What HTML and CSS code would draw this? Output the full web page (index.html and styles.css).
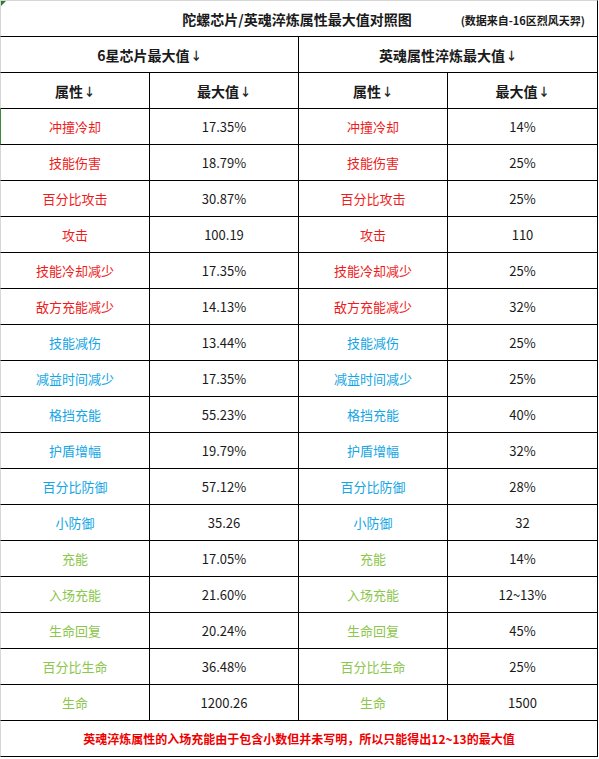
FILE: index.html
```html
<!DOCTYPE html>
<html lang="zh">
  <head>
    <meta charset="UTF-8" />
    <meta name="viewport" content="width=device-width, initial-scale=1.0" />
    <title>陀螺芯片/英魂淬炼属性最大值对照图</title>
    <link rel="stylesheet" href="styles.css">
  </head>
  <body>
    <div class="sheet">
      <div class="cell title-cell">
        <span class="title">陀螺芯片/英魂淬炼属性最大值对照图</span>
        <span class="source">(数据来自-16区烈风天羿)</span>
      </div>

      <div class="cell group first">6星芯片最大值<span class="arrow">↓</span></div>
      <div class="cell group">英魂属性淬炼最大值<span class="arrow">↓</span></div>

      <div class="cell head first">属性<span class="arrow">↓</span></div>
      <div class="cell head">最大值<span class="arrow">↓</span></div>
      <div class="cell head">属性<span class="arrow">↓</span></div>
      <div class="cell head">最大值<span class="arrow">↓</span></div>

      <div class="cell first red selected">冲撞冷却</div>
      <div class="cell">17.35%</div>
      <div class="cell red">冲撞冷却</div>
      <div class="cell">14%</div>

      <div class="cell first red">技能伤害</div>
      <div class="cell">18.79%</div>
      <div class="cell red">技能伤害</div>
      <div class="cell">25%</div>

      <div class="cell first red">百分比攻击</div>
      <div class="cell">30.87%</div>
      <div class="cell red">百分比攻击</div>
      <div class="cell">25%</div>

      <div class="cell first red">攻击</div>
      <div class="cell">100.19</div>
      <div class="cell red">攻击</div>
      <div class="cell">110</div>

      <div class="cell first red">技能冷却减少</div>
      <div class="cell">17.35%</div>
      <div class="cell red">技能冷却减少</div>
      <div class="cell">25%</div>

      <div class="cell first red">敌方充能减少</div>
      <div class="cell">14.13%</div>
      <div class="cell red">敌方充能减少</div>
      <div class="cell">32%</div>

      <div class="cell first blue">技能减伤</div>
      <div class="cell">13.44%</div>
      <div class="cell blue">技能减伤</div>
      <div class="cell">25%</div>

      <div class="cell first blue">减益时间减少</div>
      <div class="cell">17.35%</div>
      <div class="cell blue">减益时间减少</div>
      <div class="cell">25%</div>

      <div class="cell first blue">格挡充能</div>
      <div class="cell">55.23%</div>
      <div class="cell blue">格挡充能</div>
      <div class="cell">40%</div>

      <div class="cell first blue">护盾增幅</div>
      <div class="cell">19.79%</div>
      <div class="cell blue">护盾增幅</div>
      <div class="cell">32%</div>

      <div class="cell first blue">百分比防御</div>
      <div class="cell">57.12%</div>
      <div class="cell blue">百分比防御</div>
      <div class="cell">28%</div>

      <div class="cell first blue">小防御</div>
      <div class="cell">35.26</div>
      <div class="cell blue">小防御</div>
      <div class="cell">32</div>

      <div class="cell first green">充能</div>
      <div class="cell">17.05%</div>
      <div class="cell green">充能</div>
      <div class="cell">14%</div>

      <div class="cell first green">入场充能</div>
      <div class="cell">21.60%</div>
      <div class="cell green">入场充能</div>
      <div class="cell">12~13%</div>

      <div class="cell first green">生命回复</div>
      <div class="cell">20.24%</div>
      <div class="cell green">生命回复</div>
      <div class="cell">45%</div>

      <div class="cell first green">百分比生命</div>
      <div class="cell">36.48%</div>
      <div class="cell green">百分比生命</div>
      <div class="cell">25%</div>

      <div class="cell first green">生命</div>
      <div class="cell">1200.26</div>
      <div class="cell green">生命</div>
      <div class="cell">1500</div>

      <div class="cell note first">英魂淬炼属性的入场充能由于包含小数但并未写明，所以只能得出12~13的最大值</div>
    </div>
  </body>
</html>
```

FILE: styles.css
```css
* {
  margin: 0;
  padding: 0;
  box-sizing: border-box;
}

body {
  font-family: "Noto Sans CJK SC", "Noto Sans", sans-serif;
  background: #ffffff;
  color: #1a1a1a;
}

.sheet {
  position: relative;
  display: grid;
  grid-template-columns: 150px 149px 149px 150px;
  grid-template-rows: 37px;
  grid-auto-rows: 36px;
  width: 598px;
  border-right: 1px solid #d6d6d6;
}

/* little green corner of the selected sheet */
.sheet::before {
  content: "";
  position: absolute;
  top: 1px;
  left: 1px;
  border-top: 5px solid #2e7d32;
  border-right: 5px solid transparent;
}

.cell {
  display: flex;
  align-items: center;
  justify-content: center;
  border-right: 1px solid #000;
  border-bottom: 1px solid #000;
  font-size: 13px;
  white-space: nowrap;
}

.first {
  border-left: 1px solid #d6d6d6;
}

.title-cell {
  grid-column: 1 / 5;
  position: relative;
  border-top: 1px solid #d6d6d6;
  border-left: 1px solid #d6d6d6;
}

.title {
  font-size: 14px;
  font-weight: bold;
  margin-left: -4px;
}

.source {
  position: absolute;
  right: 12px;
  top: 11px;
  font-size: 11px;
  font-weight: bold;
}

.group {
  grid-column: span 2;
  font-size: 14px;
  font-weight: bold;
}

.head {
  font-size: 14px;
  font-weight: bold;
}

.arrow {
  font-size: 11px;
  font-weight: normal;
  margin-left: 1px;
  -webkit-text-stroke: 0.4px currentColor;
}

.red {
  color: #ee1c1c;
}

.blue {
  color: #14a6e4;
}

.green {
  color: #8cc64c;
}

.selected {
  border-left: 1px solid #3c8a3c;
}

.note {
  grid-column: 1 / 5;
  color: #ee0000;
  font-weight: bold;
  font-size: 12px;
}
```
